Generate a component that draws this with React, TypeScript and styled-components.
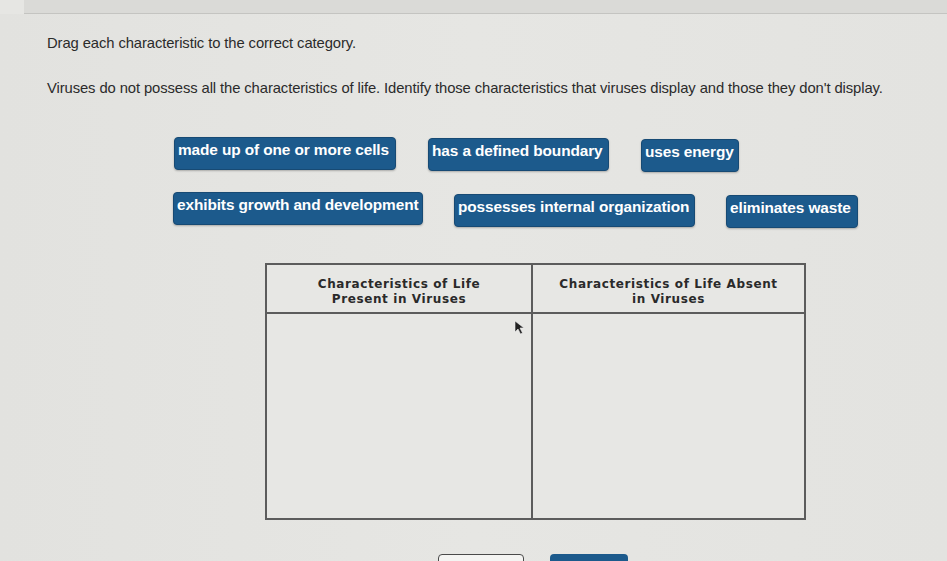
import React from "react";
import styled, { createGlobalStyle } from "styled-components";

const Global = createGlobalStyle`
  html, body { margin: 0; padding: 0; background: #e4e4e1; }
  body { font-family: "Liberation Sans", Arial, sans-serif; overflow: hidden; }
`;

const Page = styled.div`
  width: 947px;
  height: 561px;
  display: flex;
  flex-direction: column;
  background: linear-gradient(90deg, #e2e2df 0%, #e6e6e3 50%, #e3e3e0 100%);
  overflow: hidden;
  & > * { flex-shrink: 0; }
`;

const TopBar = styled.div`
  display: flex;
  height: 14px;
`;

const TopCorner = styled.div`
  width: 24px;
  background: #e6e6e3;
`;

const TopStrip = styled.div`
  flex: 1;
  background: #dadad7;
  border-bottom: 1px solid #c4c4c1;
`;

const Prompt = styled.p<{ $top: number }>`
  margin: ${(p) => p.$top}px 0 0 47px;
  font-size: 14.8px;
  line-height: 16px;
  color: #2b2b2b;
  letter-spacing: -0.1px;
`;

const ChipRow = styled.div<{ $left: number; $top: number; $gap: number }>`
  display: flex;
  align-items: flex-start;
  gap: ${(p) => p.$gap}px;
  margin: ${(p) => p.$top}px 0 0 ${(p) => p.$left}px;
`;

const Chip = styled.div<{ $w: number; $dy?: number }>`
  width: ${(p) => p.$w}px;
  height: 33px;
  box-sizing: border-box;
  margin-top: ${(p) => p.$dy ?? 0}px;
  padding: 3px 0 0 3px;
  background: #1c5a8c;
  border: 1px solid #174a74;
  border-radius: 4px;
  box-shadow: 0 1px 2px rgba(0, 0, 0, 0.25);
  color: #ffffff;
  font-weight: 700;
  font-size: 15.4px;
  line-height: 18px;
  white-space: nowrap;
  letter-spacing: -0.1px;
`;

const Table = styled.div`
  position: relative;
  margin: 35px 0 0 265px;
  width: 541px;
  height: 257px;
  box-sizing: border-box;
  border: 2px solid #5c5c5c;
  display: grid;
  grid-template-columns: 266px 1fr;
  grid-template-rows: 49px 1fr;
  background: #e7e7e4;
`;

const HeadCell = styled.div<{ $last?: boolean }>`
  display: flex;
  align-items: center;
  justify-content: center;
  text-align: center;
  padding-top: 6px;
  border-bottom: 2px solid #5c5c5c;
  border-right: ${(p) => (p.$last ? "none" : "2px solid #5c5c5c")};
  font-family: "DejaVu Sans", Verdana, sans-serif;
  font-weight: 700;
  font-size: 12px;
  line-height: 15px;
  letter-spacing: 0.6px;
  color: #2a2a2a;
`;

const BodyCell = styled.div<{ $last?: boolean }>`
  border-right: ${(p) => (p.$last ? "none" : "2px solid #5c5c5c")};
`;

const Cursor = styled.svg`
  position: absolute;
  left: 247px;
  top: 55px;
`;

const Buttons = styled.div`
  display: flex;
  gap: 26px;
  margin: 34px 0 0 438px;
`;

const GhostButton = styled.div`
  width: 86px;
  height: 30px;
  box-sizing: border-box;
  border: 1px solid #4a4a4a;
  border-radius: 4px;
  background: #f4f4f2;
`;

const PrimaryButton = styled.div`
  width: 78px;
  height: 30px;
  border-radius: 4px;
  background: #1c5a8c;
`;

export default function App() {
  return (
    <Page>
      <Global />
      <TopBar>
        <TopCorner />
        <TopStrip />
      </TopBar>
      <Prompt $top={21}>Drag each characteristic to the correct category.</Prompt>
      <Prompt $top={29}>
        Viruses do not possess all the characteristics of life. Identify those characteristics that viruses display and those they don't display.
      </Prompt>
      <ChipRow $left={174} $top={41} $gap={32}>
        <Chip $w={222}>made up of one or more cells</Chip>
        <Chip $w={181} $dy={1}>has a defined boundary</Chip>
        <Chip $w={98} $dy={2}>uses energy</Chip>
      </ChipRow>
      <ChipRow $left={173} $top={20} $gap={31}>
        <Chip $w={250}>exhibits growth and development</Chip>
        <Chip $w={241} $dy={2}>possesses internal organization</Chip>
        <Chip $w={132} $dy={3}>eliminates waste</Chip>
      </ChipRow>
      <Table>
        <HeadCell>
          Characteristics of Life
          <br />
          Present in Viruses
        </HeadCell>
        <HeadCell $last>
          Characteristics of Life Absent
          <br />
          in Viruses
        </HeadCell>
        <BodyCell />
        <BodyCell $last />
        <Cursor width="12" height="16" viewBox="0 0 12 16">
          <path d="M1 1 L1 12 L4 9 L6.5 14 L8.5 13 L6 8 L10 8 Z" fill="#222" stroke="#eee" strokeWidth="0.6" />
        </Cursor>
      </Table>
      <Buttons>
        <GhostButton />
        <PrimaryButton />
      </Buttons>
    </Page>
  );
}
